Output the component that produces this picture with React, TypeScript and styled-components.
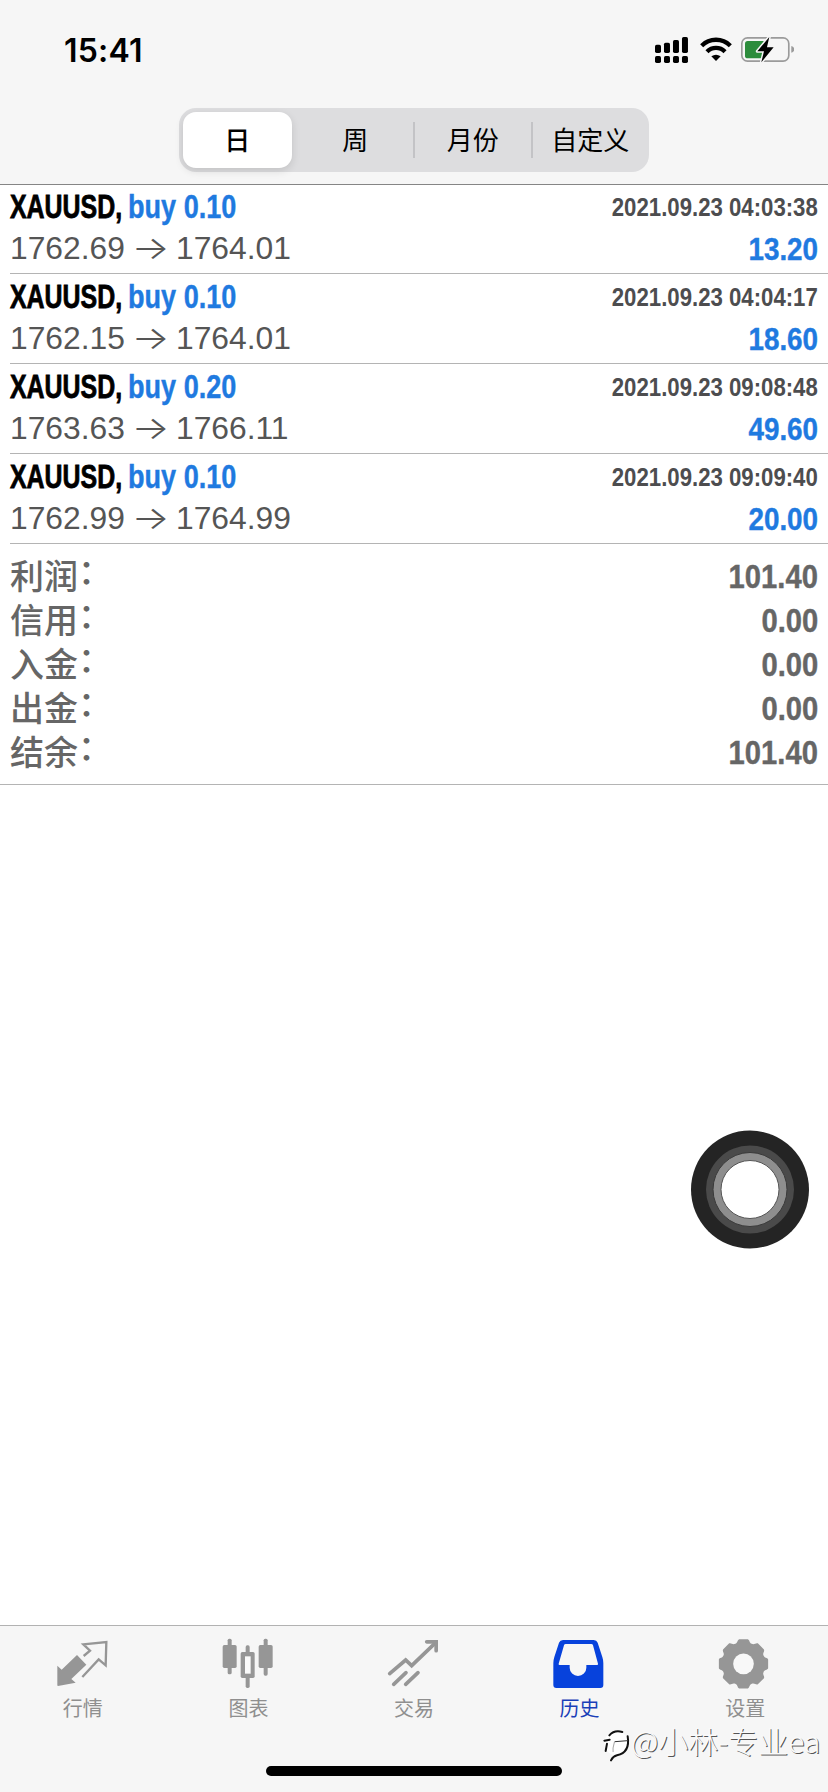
import React from "react";
import styled, { createGlobalStyle } from "styled-components";

const GlobalStyle = createGlobalStyle`
  *, *::before, *::after { box-sizing: border-box; }
  body { margin: 0; background: #fff; }
`;

const cjk = `"Noto Sans CJK SC", sans-serif`;
const sans = `"Liberation Sans", Arial, sans-serif`;

const Screen = styled.div`
  position: relative;
  display: flex;
  flex-direction: column;
  width: 828px;
  height: 1792px;
  background: #fff;
  overflow: hidden;
  font-family: "Liberation Sans", ${cjk};
`;

const Header = styled.header`
  flex: none;
  height: 185px;
  background: #f6f6f6;
  border-bottom: 1px solid #858585;
`;

const StatusBar = styled.div`
  display: flex;
  align-items: center;
  justify-content: space-between;
  height: 100px;
  padding: 0 34px 0 64px;
`;

const Clock = styled.span`
  padding-top: 1px;
  font: 600 32px/40px Inter, sans-serif;
  letter-spacing: 0.2px;
  color: #000;
`;

const StatusIcons = styled.div`
  display: flex;
  align-items: center;
  svg { display: block; height: 30px; }
  svg:nth-child(2) { margin: 0 9px 0 11.4px; }
`;

const Segments = styled.div`
  display: grid;
  grid-template-columns: repeat(4, 1fr);
  width: 470px;
  height: 64px;
  margin: 8px auto 0;
  padding: 4px 0;
  border-radius: 17px;
  background: #dddddf;
`;

const Segment = styled.button<{ $active?: boolean; $divided?: boolean }>`
  position: relative;
  margin: ${(p) => (p.$active ? "0 5px 0 4px" : "0")};
  padding: 0 0 2px;
  border: 0;
  border-radius: 13px;
  background: ${(p) => (p.$active ? "#fff" : "transparent")};
  box-shadow: ${(p) => (p.$active ? "0 3px 8px rgba(0,0,0,.12)" : "none")};
  font: ${(p) => (p.$active ? 500 : 400)} 26px/1 ${cjk};
  color: #000;
  &::before {
    content: ${(p) => (p.$divided ? '""' : "none")};
    position: absolute;
    left: -1px;
    top: 10px;
    bottom: 10px;
    width: 2px;
    background: #c3c3c6;
  }
`;

const DealList = styled.ul`
  flex: none;
  margin: 0;
  padding: 0 0 0 10px;
  list-style: none;
`;

const Deal = styled.li`
  display: flex;
  flex-direction: column;
  height: 90px;
  padding: 2px 10px 0 0;
  border-bottom: 1px solid #b4b4b4;
  &:first-child { height: 89px; padding-top: 1px; }
`;

const DealLine = styled.div`
  display: flex;
  justify-content: space-between;
  height: 42px;
  white-space: pre;
`;

const Title = styled.div`
  display: grid;
  grid-template-columns: 118px 110px;
`;

/* Bold text narrowed horizontally towards the edge it is aligned to;
   the thin text stroke keeps the stems as heavy as before narrowing. */
const Condensed = styled.span<{ $scale: number; $end?: boolean }>`
  display: block;
  font: bold 33px/42px ${sans};
  -webkit-text-stroke: 0.4px currentColor;
  transform: scaleX(${(p) => p.$scale});
  transform-origin: ${(p) => (p.$end ? "right" : "left")} center;
`;

const SymbolName = styled(Condensed)`
  -webkit-text-stroke-width: 0.8px;
  color: #000;
`;

const Side = styled(Condensed)`
  color: #1f7ae0;
`;

const Time = styled(Condensed)`
  -webkit-text-stroke-width: 0;
  font-size: 25.5px;
  color: #4d4d4f;
`;

const Profit = styled(Condensed)`
  font-size: 32px;
  color: #1f7ae0;
`;

const Prices = styled.span`
  display: flex;
  margin-top: -1px;
  font: 31.8px/42px ${sans};
  color: #555;
`;

const Arrow = styled.span`
  width: 51px;
  text-align: center;
  font: 300 32px/42px Inter, sans-serif;
  transform: scaleX(1.25);
`;

const Summary = styled.dl`
  flex: none;
  height: 241px;
  margin: 0;
  padding: 10px 10px 0;
  border-bottom: 1px solid #b4b4b4;
`;

const SummaryRow = styled.div`
  display: flex;
  justify-content: space-between;
  height: 44px;
  color: #666;
`;

const Label = styled.dt`
  margin-top: -1px;
  font: 500 34px/44px ${cjk};
`;

const Colon = styled.span`
  position: relative;
  top: -5px;
`;

const Value = styled.dd`
  margin: 1px 0 0;
`;

const Amount = styled(Condensed)`
  line-height: 44px;
`;

const Spacer = styled.div`
  flex: 1;
`;

const AssistiveTouch = styled.button`
  position: absolute;
  left: 691px;
  top: 1130px;
  width: 118px;
  height: 119px;
  padding: 0;
  border: 0;
  background: none;
  svg { display: block; }
`;

const TabBar = styled.nav`
  flex: none;
  display: flex;
  height: 167px;
  background: #f6f6f6;
  border-top: 1px solid #b2b2b2;
`;

const Tab = styled.a<{ $active?: boolean }>`
  flex: 1;
  display: flex;
  flex-direction: column;
  align-items: center;
  padding-top: 12px;
  color: ${(p) => (p.$active ? "#0742dc" : "#969696")};
  svg { display: block; width: 50px; height: 50px; }
`;

const TabLabel = styled.span<{ $active?: boolean }>`
  margin-top: 6px;
  font: 400 20px/28px ${cjk};
  color: ${(p) => (p.$active ? "#1a3fb8" : "#8f8f8f")};
`;

const HomeIndicator = styled.div`
  position: absolute;
  left: 266px;
  bottom: 16px;
  width: 296px;
  height: 10px;
  border-radius: 5px;
  background: #000;
`;

const Watermark = styled.div`
  position: absolute;
  left: 603px;
  top: 1719px;
  display: flex;
  align-items: center;
  font: 300 30px/42px ${cjk};
  color: #fafafa;
  white-space: nowrap;
  text-shadow: 1px 1px 0 #555;
  svg { display: block; }
`;

const SignalIcon = () => (
  <svg width="33.3" viewBox="105 45 100 90" fill="#000">
    {[[105, 74], [132, 68], [159, 60], [186, 51]].map(([x, y]) => (
      <g key={x}>
        <rect x={x} y={y} width="18" height={99 - y} rx="5" />
        <rect x={x} y="108" width="18" height="21" rx="5" />
      </g>
    ))}
  </svg>
);

const WifiIcon = () => (
  <svg width="32" viewBox="239 45 96 90" fill="none" stroke="#000" strokeWidth="13">
    <path d="M244 77 A61 61 0 0 1 330 77" />
    <path d="M260 95 A38 38 0 0 1 314 95" />
    <path d="M273 109 Q287 99 301 109 L287 123 Z" fill="#000" stroke="none" />
  </svg>
);

const BatteryIcon = () => (
  <svg width="53.3" viewBox="362 45 160 90">
    <rect x="364.500" y="53.500" width="141" height="70" rx="17" fill="none" stroke="#9b9b9b" strokeWidth="5" />
    <path d="M513 78 Q522 81 522 88 Q522 95 513 98Z" fill="#9b9b9b" />
    <path d="M382 63 H430 V115 H382 Q374 115 374 107 V71 Q374 63 382 63Z" fill="#2c8c3c" />
    <path d="M447 51 L411 94 H431 L423 127 L460 82 H440 Z" fill="#000" stroke="#f6f6f6" strokeWidth="9" strokeLinejoin="round" paintOrder="stroke" />
  </svg>
);

const QuotesIcon = () => (
  <svg viewBox="173 84 150 150" overflow="visible">
    <path d="M171 167 L184 179 L230 135 L258 164 L213 207 L226 218 L173 228 Q171 228 171 225Z" fill="currentColor" />
    <path d="M250 138 L269 122 L249 103 L318 96 L316 166 L295 148 L246 201" fill="none" stroke="currentColor" strokeWidth="7" />
  </svg>
);

const ChartIcon = () => (
  <svg viewBox="670 84 150 150" fill="currentColor" overflow="visible">
    <rect x="684" y="86" width="12" height="107" rx="5" />
    <rect x="669" y="105" width="42" height="69" rx="5" />
    <rect x="738" y="106" width="12" height="128" rx="5" />
    <rect x="723" y="126" width="42" height="78" rx="5" />
    <rect x="736" y="139" width="17" height="52" fill="#fafafa" />
    <rect x="792" y="86" width="12" height="111" rx="5" />
    <rect x="777" y="105" width="42" height="69" rx="5" />
  </svg>
);

const TradeIcon = () => (
  <svg viewBox="267 84 150 150" fill="none" stroke="currentColor" strokeWidth="11" strokeLinecap="round" overflow="visible">
    <path d="M269 191 L317 150 L335 167 L407 98" strokeLinejoin="miter" />
    <path d="M380 95.500 H408.500 V122" />
    <path d="M281 223 L318 188 M317 223 L354 188" />
  </svg>
);

const HistoryIcon = () => (
  <svg viewBox="764 84 150 150" overflow="visible">
    <path
      fillRule="evenodd"
      fill="currentColor"
      d="M759 160 Q759 150 762 141 L776 98 Q779 90 788 90 H880 Q889 90 892 98 L906 141 Q909 150 909 160 V225 Q909 234 900 234 H768 Q759 234 759 225Z M796 102 Q792 102 791 106 L775 161 Q774 165 778 165 H808 V173 A25 25 0 0 0 858 173 V165 H890 Q894 165 893 161 L878 106 Q877 102 873 102Z"
    />
  </svg>
);

const polar = (angle: number, radius: number) => {
  const t = (angle * Math.PI) / 180;
  return `${(551.5 + radius * Math.cos(t)).toFixed(1)} ${(161.5 + radius * Math.sin(t)).toFixed(1)}`;
};

const gearPath =
  `M${polar(-10, 75)} ` +
  Array.from({ length: 8 }, (_, i) => {
    const a = i * 45;
    return (
      `L${polar(a + 10, 75)} ` +
      `C${polar(a + 15, 74)} ${polar(a + 15, 65)} ${polar(a + 22.5, 65)} ` +
      `C${polar(a + 30, 65)} ${polar(a + 30, 74)} ${polar(a + 35, 75)}`
    );
  }).join(" ") +
  "Z";

const SettingsIcon = () => (
  <svg viewBox="481 84 150 150" overflow="visible">
    <path d={gearPath} fill="currentColor" />
    <circle cx="551.500" cy="161.500" r="31" fill="#f8f8f8" />
  </svg>
);

const WatermarkLogo = () => (
  <svg width="28" height="38" viewBox="0 -6 84 114" fill="none" stroke="#111" strokeWidth="6" strokeLinecap="round" overflow="visible">
    <circle cx="40" cy="61" r="36" fill="#fff" stroke="none" />
    <path d="M4 53 L20 50" />
    <path d="M19 37 Q34 20 58 27" />
    <path d="M12 62 L8 84" />
    <path d="M74 40 Q82 88 42 97 Q30 100 24 112" />
    <path d="M36 56 L74 53" stroke="#333" strokeWidth="3" />
    <path d="M34 58 Q28 78 30 86" stroke="#777" strokeWidth="2" />
  </svg>
);

const deals = [
  { volume: "0.10", time: "2021.09.23 04:03:38", open: "1762.69", close: "1764.01", profit: "13.20" },
  { volume: "0.10", time: "2021.09.23 04:04:17", open: "1762.15", close: "1764.01", profit: "18.60" },
  { volume: "0.20", time: "2021.09.23 09:08:48", open: "1763.63", close: "1766.11", profit: "49.60" },
  { volume: "0.10", time: "2021.09.23 09:09:40", open: "1762.99", close: "1764.99", profit: "20.00" },
];

const totals = [
  ["利润", "101.40"],
  ["信用", "0.00"],
  ["入金", "0.00"],
  ["出金", "0.00"],
  ["结余", "101.40"],
];

const tabs = [
  { label: "行情", Icon: QuotesIcon },
  { label: "图表", Icon: ChartIcon },
  { label: "交易", Icon: TradeIcon },
  { label: "历史", Icon: HistoryIcon, active: true },
  { label: "设置", Icon: SettingsIcon },
];

export default function App() {
  return (
    <Screen>
      <GlobalStyle />
      <Header>
        <StatusBar>
          <Clock>15:41</Clock>
          <StatusIcons>
            <SignalIcon />
            <WifiIcon />
            <BatteryIcon />
          </StatusIcons>
        </StatusBar>
        <Segments>
          <Segment $active>日</Segment>
          <Segment>周</Segment>
          <Segment $divided>月份</Segment>
          <Segment $divided>自定义</Segment>
        </Segments>
      </Header>
      <DealList>
        {deals.map((d) => (
          <Deal key={d.time}>
            <DealLine>
              <Title>
                <SymbolName $scale={0.755}>XAUUSD,</SymbolName>
                <Side $scale={0.82}>buy {d.volume}</Side>
              </Title>
              <Time $scale={0.87} $end>{d.time}</Time>
            </DealLine>
            <DealLine>
              <Prices>
                {d.open}
                <Arrow>→</Arrow>
                {d.close}
              </Prices>
              <Profit $scale={0.87} $end>{d.profit}</Profit>
            </DealLine>
          </Deal>
        ))}
      </DealList>
      <Summary>
        {totals.map(([label, value]) => (
          <SummaryRow key={label}>
            <Label>
              {label}
              <Colon>：</Colon>
            </Label>
            <Value>
              <Amount $scale={0.885} $end>{value}</Amount>
            </Value>
          </SummaryRow>
        ))}
      </Summary>
      <Spacer />
      <TabBar>
        {tabs.map(({ label, Icon, active }) => (
          <Tab key={label} $active={active}>
            <Icon />
            <TabLabel $active={active}>{label}</TabLabel>
          </Tab>
        ))}
      </TabBar>
      <AssistiveTouch aria-label="AssistiveTouch">
        <svg width="118" height="119" viewBox="0 0 118 119">
          <circle cx="59" cy="59.500" r="59" fill="#242424" />
          <circle cx="59" cy="59.500" r="44" fill="#4a4a4a" />
          <circle cx="59" cy="59.500" r="37" fill="#8e8e8e" stroke="#3a3a3a" />
          <circle cx="59" cy="59.500" r="29" fill="#fff" stroke="#555" />
        </svg>
      </AssistiveTouch>
      <Watermark>
        <WatermarkLogo />
        @小林-专业ea
      </Watermark>
      <HomeIndicator />
    </Screen>
  );
}
